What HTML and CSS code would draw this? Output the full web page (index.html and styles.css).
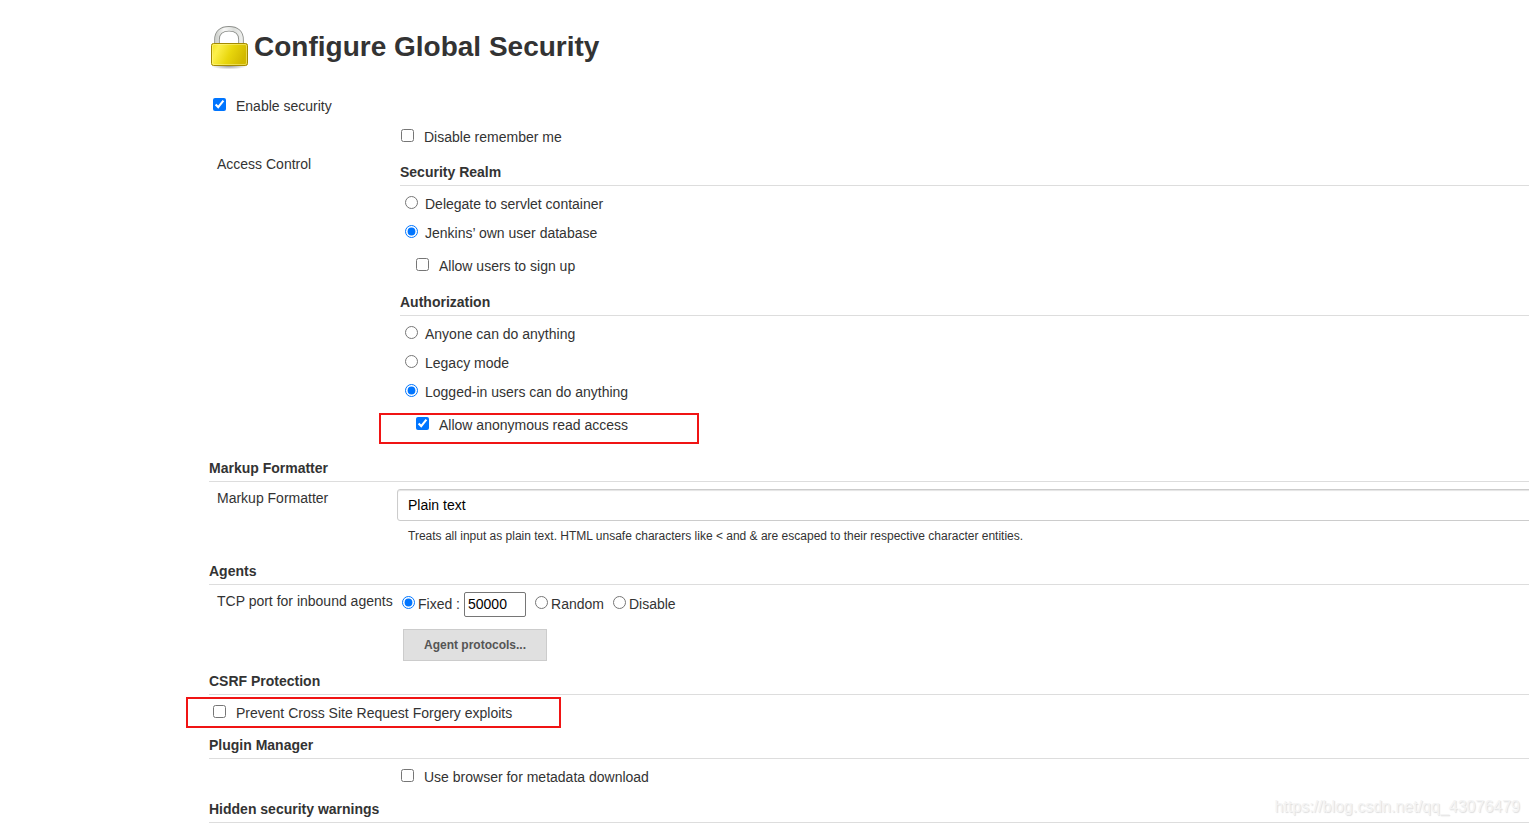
FILE: index.html
```html
<!DOCTYPE html>
<html lang="en">
<head>
<meta charset="utf-8">
<title>Configure Global Security</title>
<link rel="stylesheet" href="styles.css">
</head>
<body>
<main class="page">
  <header class="page-header">
    <svg class="lock" viewBox="0 0 48 48" aria-hidden="true">
      <defs>
        <linearGradient id="body" x1="0" y1="0" x2="1" y2="0.3">
          <stop offset="0" stop-color="#f2e11c"/>
          <stop offset="0.22" stop-color="#fdf04a"/>
          <stop offset="0.6" stop-color="#e8d60c"/>
          <stop offset="1" stop-color="#d2b900"/>
        </linearGradient>
        <linearGradient id="steel" x1="0" y1="0" x2="1" y2="0">
          <stop offset="0" stop-color="#d2d4d0"/>
          <stop offset="0.3" stop-color="#f8f8f7"/>
          <stop offset="0.7" stop-color="#dcdedb"/>
          <stop offset="1" stop-color="#ecedeb"/>
        </linearGradient>
        <radialGradient id="shade">
          <stop offset="0" stop-color="#000" stop-opacity="0.4"/>
          <stop offset="1" stop-color="#000" stop-opacity="0"/>
        </radialGradient>
      </defs>
      <ellipse cx="24" cy="43" rx="18" ry="3.5" fill="url(#shade)"/>
      <path d="M12 23V16.500C12 9.500 16.500 5.800 24 5.800S36 9.500 36 16.500V23" fill="none" stroke="#8d8f8b" stroke-width="5.600"/>
      <path d="M12 23V16.500C12 9.500 16.500 5.800 24 5.800S36 9.500 36 16.500V23" fill="none" stroke="url(#steel)" stroke-width="3.800"/>
      <rect x="6.500" y="20.500" width="36" height="22" rx="2" fill="url(#body)" stroke="#a48a00"/>
      <rect x="7.500" y="21.500" width="34" height="20" rx="1.500" fill="none" stroke="#fff79a" stroke-opacity="0.5"/>
    </svg>
    <h1 class="title">Configure Global Security</h1>
  </header>

  <form class="config">
    <label class="option top-option"><input type="checkbox" checked>Enable security</label>
    <label class="option setting-option remember"><input type="checkbox">Disable remember me</label>

    <div class="setting access">
      <div class="setting-name">Access Control</div>
      <div class="access-main">
        <h2 class="section-title">Security Realm</h2>
        <div class="options">
          <label class="option radio"><input type="radio" name="realm">Delegate to servlet container</label>
          <label class="option radio"><input type="radio" name="realm" checked>Jenkins’ own user database</label>
        </div>
        <label class="option nested"><input type="checkbox">Allow users to sign up</label>

        <h2 class="section-title authorization">Authorization</h2>
        <div class="options">
          <label class="option radio"><input type="radio" name="auth">Anyone can do anything</label>
          <label class="option radio"><input type="radio" name="auth">Legacy mode</label>
          <label class="option radio"><input type="radio" name="auth" checked>Logged-in users can do anything</label>
        </div>
        <div class="marked">
          <label class="option nested"><input type="checkbox" checked>Allow anonymous read access</label>
          <span class="frame frame-anonymous"></span>
        </div>
      </div>
    </div>

    <section class="section markup">
      <h2 class="section-title">Markup Formatter</h2>
      <div class="setting">
        <label class="setting-name" for="formatter">Markup Formatter</label>
        <div class="formatter-main">
          <select class="formatter" id="formatter"><option>Plain text</option></select>
          <p class="help">Treats all input as plain text. HTML unsafe characters like &lt; and &amp; are escaped to their respective character entities.</p>
        </div>
      </div>
    </section>

    <section class="section agents">
      <h2 class="section-title">Agents</h2>
      <div class="setting">
        <div class="setting-name">TCP port for inbound agents</div>
        <div class="agents-main">
          <div class="ports">
            <label class="port"><input type="radio" name="port" checked>Fixed :</label>
            <input class="port-number" type="text" value="50000" aria-label="Fixed port">
            <label class="port"><input type="radio" name="port">Random</label>
            <label class="port"><input type="radio" name="port">Disable</label>
          </div>
          <button class="button" type="button">Agent protocols...</button>
        </div>
      </div>
    </section>

    <section class="section csrf">
      <h2 class="section-title">CSRF Protection</h2>
      <div class="marked">
        <label class="option top-option"><input type="checkbox">Prevent Cross Site Request Forgery exploits</label>
        <span class="frame frame-csrf"></span>
      </div>
    </section>

    <section class="section">
      <h2 class="section-title">Plugin Manager</h2>
      <label class="option setting-option"><input type="checkbox">Use browser for metadata download</label>
    </section>

    <section class="section">
      <h2 class="section-title">Hidden security warnings</h2>
    </section>
  </form>
</main>
<div class="watermark">https://blog.csdn.net/qq_43076479</div>
</body>
</html>
```
FILE: styles.css
```css
* {
  box-sizing: border-box;
}

body {
  margin: 0;
  background: #fff;
  color: #333;
  font: 14px/20px "Liberation Sans", Arial, sans-serif;
  overflow: hidden;
}

.page {
  padding: 23px 0 0 209px;
}

.page-header {
  display: flex;
  align-items: center;
  gap: 1px;
  margin-left: -4px;
}

.lock {
  width: 48px;
  height: 48px;
}

.title {
  margin: 0;
  font-size: 28px;
  line-height: 48px;
}

input {
  margin: 0;
  flex: none;
}

input[type="checkbox"],
input[type="radio"] {
  width: 13px;
  height: 13px;
  margin-bottom: 3px;
}

.option {
  display: flex;
  align-items: center;
  gap: 10px;
}

.top-option {
  padding-left: 4px;
}

.setting-option {
  padding-left: 192px;
}

.radio {
  padding-left: 5px;
  gap: 7px;
}

.nested {
  padding-left: 16px;
}

.config > .top-option {
  margin-top: 25px;
}

.remember {
  margin-top: 11px;
}

.setting {
  display: grid;
  grid-template-columns: 188px minmax(0, 1fr);
}

.setting-name {
  padding-left: 8px;
  white-space: nowrap;
}

.access {
  grid-template-columns: 191px minmax(0, 1fr);
  margin-top: 7px;
}

.access-main {
  padding-top: 8px;
}

.section-title {
  margin: 0 0 8px;
  padding-bottom: 3px;
  border-bottom: 1px solid #ddd;
  font-size: 14px;
  line-height: 20px;
}

.options {
  display: grid;
  gap: 9px;
  margin-bottom: 13px;
}

.authorization {
  margin-top: 16px;
}

.section {
  margin-top: 12px;
}

.markup {
  margin-top: 23px;
}

.markup .section-title,
.agents .section-title {
  margin-bottom: 6px;
}

.agents {
  margin-top: 15px;
}

.csrf {
  margin-top: 10px;
}

.formatter-main {
  padding-top: 1px;
  margin-right: -8px;
}

.formatter {
  display: block;
  width: 100%;
  height: 32px;
  padding: 0 10px;
  appearance: none;
  border: 1px solid #ccc;
  border-radius: 3px;
  background: #fff;
  box-shadow: inset 0 1px 1px #e4e4e4;
  color: #000;
  font: inherit;
}

.help {
  margin: 5px 0 0;
  padding-left: 11px;
  font-size: 12px;
}

.agents-main {
  padding: 1px 0 0 5px;
}

.ports {
  display: flex;
  align-items: center;
  gap: 9px;
}

.port {
  display: flex;
  align-items: center;
  gap: 3px;
  padding-bottom: 2px;
}

.port-number {
  width: 62px;
  height: 25px;
  margin-left: -5px;
  padding: 0 3px 2px;
  border: 1px solid #767676;
  border-radius: 2px;
  color: #000;
  font: inherit;
}

.button {
  display: block;
  height: 32px;
  margin: 12px 0 0 1px;
  padding: 0 20px;
  border: 1px solid #ccc;
  background: #e0e0e0;
  color: #555;
  font: bold 12px/30px "Liberation Sans", Arial, sans-serif;
}

.marked {
  position: relative;
}

.frame {
  position: absolute;
  border: 2px solid #f01414;
  pointer-events: none;
}

.frame-anonymous {
  left: -21px;
  top: -2px;
  width: 320px;
  height: 31px;
}

.frame-csrf {
  left: -23px;
  top: -6px;
  width: 375px;
  height: 31px;
}

.watermark {
  position: absolute;
  right: 9px;
  bottom: 8px;
  color: #f4f4f4;
  font-size: 16px;
  text-shadow: 1px 1px 1px #ddd;
}
```
